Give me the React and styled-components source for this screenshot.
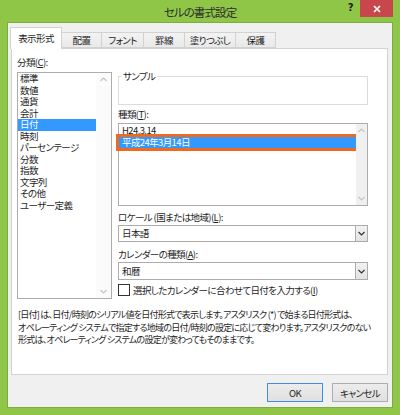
import React from 'react';
import styled, { createGlobalStyle } from 'styled-components';

const Global = createGlobalStyle`
  html, body { margin: 0; padding: 0; }
  body {
    width: 400px; height: 415px; overflow: hidden;
    font-family: "Noto Sans CJK JP", "Noto Sans", sans-serif;
    font-size: 9.5px;
    letter-spacing: -0.6px;
    font-feature-settings: "palt" 1;
    color: #1e1e1e;
  }
  #root { width: 400px; height: 415px; }
`;

const Window = styled.div`
  width: 400px; height: 415px; box-sizing: border-box;
  background: #8fc648;
  display: flex; flex-direction: column;
  padding: 0 7px 7px 7px;
`;

const TitleBar = styled.div`
  height: 22px; flex: none;
  display: grid; grid-template-columns: 1fr auto 1fr;
  align-items: start;
`;

const Title = styled.div`
  grid-column: 2;
  font-size: 11.5px; letter-spacing: -0.9px; line-height: 22px; color: #2d2d2d;
  padding-top: 1px;
`;

const Controls = styled.div`
  grid-column: 3; justify-self: end;
  display: flex; align-items: flex-start;
`;

const Help = styled.div`
  font-family: "DejaVu Sans", sans-serif;
  font-weight: bold; font-size: 10px; color: #1a1a1a;
  line-height: 16px; margin-right: 7px;
`;

const CloseBtn = styled.div`
  width: 33px; height: 17px; background: #c7474d;
  display: flex; align-items: center; justify-content: center;
`;

const Client = styled.div`
  flex: 1; background: #f0f0f0;
  border: 1px solid #7cae3e;
  display: flex; flex-direction: column;
  padding: 4px 4px 0 2px;
`;

const TabStrip = styled.div`
  display: flex; align-items: flex-end; height: 21px;
  position: relative; z-index: 1;
`;

const Tab = styled.div`
  box-sizing: border-box;
  width: ${p => p.$w}px;
  height: ${p => (p.$active ? 22 : 16)}px;
  margin-bottom: ${p => (p.$active ? -1 : 0)}px;
  margin-left: ${p => (p.$first ? 0 : -1)}px;
  background: ${p => (p.$active ? '#ffffff' : 'linear-gradient(#f3f3f3, #e9e9e9)')};
  border: 1px solid #d2d2d2;
  border-bottom: ${p => (p.$active ? 'none' : '1px solid #d2d2d2')};
  display: flex; align-items: center; justify-content: center;
  padding-bottom: ${p => (p.$active ? 2 : 0)}px;
  line-height: 12px; white-space: nowrap;
  position: relative; z-index: ${p => (p.$active ? 2 : 1)};
`;

const Panel = styled.div`
  box-sizing: border-box; height: 327px; margin-left: 1px;
  background: #fff; border: 1px solid #d2d2d2;
  padding: 7px 19px 0 5px;
  display: flex; flex-direction: column;
`;

const Body = styled.div`
  display: grid; grid-template-columns: 95px 250px; column-gap: 6px;
`;

const Col = styled.div`
  display: flex; flex-direction: column;
  padding-top: ${p => p.$top || 0}px;
`;

const Label = styled.div`
  line-height: 12px; white-space: nowrap;
  margin-top: ${p => p.$mt || 0}px;
  margin-bottom: ${p => p.$mb || 0}px;
`;

const Key = styled.span`
  text-decoration: underline;
`;

const ListBox = styled.div`
  box-sizing: border-box; height: ${p => p.$h}px;
  border: 1px solid #abadb3; background: #fff;
  display: grid; grid-template-columns: 1fr ${p => p.$sb}px;
`;

const Items = styled.div`
  padding-top: ${p => p.$pt || 0}px;
  display: flex; flex-direction: column;
`;

const Item = styled.div`
  height: 11.5px; line-height: 11.5px; padding-left: ${p => p.$pl || 2}px;
  white-space: nowrap;
  background: ${p => (p.$sel ? '#3399ff' : 'transparent')};
  color: ${p => (p.$sel ? '#fff' : 'inherit')};
  outline: ${p => (p.$mark ? '3px solid #ee6a1f' : 'none')};
`;

const ScrollBar = styled.div`
  background: ${p => p.$bg};
  display: flex; flex-direction: column; justify-content: space-between;
  align-items: center; padding: 4px 0;
`;

const Group = styled.fieldset`
  margin: 0; box-sizing: border-box; height: 35px;
  border: 1px solid #dcdcdc; padding: 0;
`;

const Legend = styled.legend`
  margin-left: 2px; padding: 0 2px; line-height: 12px;
`;

const Select = styled.div`
  display: flex; height: ${p => p.$h}px;
  margin-top: ${p => p.$mt || 0}px;
`;

const SelectField = styled.div`
  flex: 1; box-sizing: border-box; border: 1px solid #acacac; border-right: none;
  background: #fff; line-height: ${p => p.$h - 2}px; padding-left: 3px;
`;

const DropBtn = styled.div`
  width: 13px; box-sizing: border-box; border: 1px solid #acacac;
  background: linear-gradient(#f2f2f2, #e3e3e3);
  display: flex; align-items: center; justify-content: center;
`;

const CheckRow = styled.div`
  display: flex; align-items: center; gap: 3px; margin-top: 4px; height: 12px;
`;

const Box = styled.div`
  width: 12px; height: 12px; box-sizing: border-box;
  border: 1px solid #333; background: #fff;
`;

const Desc = styled.div`
  margin-top: 10px; padding-left: 1px; line-height: 12.5px; white-space: nowrap;
  font-size: 9px; letter-spacing: -0.75px;
`;

const ButtonRow = styled.div`
  display: flex; justify-content: flex-end; gap: 9px; margin-top: 8px;
`;

const Button = styled.div`
  width: 56px; height: 19px; box-sizing: border-box;
  border: 1px solid ${p => (p.$def ? '#3c8fe0' : '#adadad')};
  background: linear-gradient(#ececec, #e0e0e0);
  display: flex; align-items: center; justify-content: center;
`;

const Up = ({ c = '#c4c4c4' }) => (
  <svg width="7" height="5" viewBox="0 0 7 5"><polyline points="0.5,4 3.5,1 6.5,4" fill="none" stroke={c} strokeWidth="1.2" /></svg>
);
const Down = ({ c = '#c4c4c4', w = 7 }) => (
  <svg width={w} height="5" viewBox="0 0 7 5"><polyline points="0.5,1 3.5,4 6.5,1" fill="none" stroke={c} strokeWidth="1.2" /></svg>
);

const tabs = [
  { label: '表示形式', w: 52, active: true },
  { label: '配置', w: 41 },
  { label: 'フォント', w: 43 },
  { label: '罫線', w: 42 },
  { label: '塗りつぶし', w: 52 },
  { label: '保護', w: 41 },
];

const categories = ['標準', '数値', '通貨', '会計', '日付', '時刻', 'パーセンテージ', '分数', '指数', '文字列', 'その他', 'ユーザー定義'];

export default function App() {
  return (
    <>
      <Global />
      <Window>
        <TitleBar>
          <Title>セルの書式設定</Title>
          <Controls>
            <Help>?</Help>
            <CloseBtn>
              <svg width="8" height="8" viewBox="0 0 8 8"><path d="M1 1L7 7M7 1L1 7" stroke="#fff" strokeWidth="1.6" /></svg>
            </CloseBtn>
          </Controls>
        </TitleBar>
        <Client>
          <TabStrip>
            {tabs.map((t, i) => (
              <Tab key={t.label} $w={t.w} $active={t.active} $first={i === 0}>{t.label}</Tab>
            ))}
          </TabStrip>
          <Panel>
            <Body>
              <Col>
                <Label $mb={4}>分類(<Key>C</Key>):</Label>
                <ListBox $h={227} $sb={15}>
                  <Items>
                    {categories.map(c => (
                      <Item key={c} $sel={c === '日付'}>{c}</Item>
                    ))}
                  </Items>
                  <ScrollBar $bg="#fbfbfb"><Up /><Down /></ScrollBar>
                </ListBox>
              </Col>
              <Col $top={14}>
                <Group>
                  <Legend>サンプル</Legend>
                </Group>
                <Label $mt={3} $mb={3}>種類(<Key>T</Key>):</Label>
                <ListBox $h={83} $sb={11}>
                  <Items $pt={1}>
                    <Item $pl={3}>H24.3.14</Item>
                    <Item $pl={3} $sel $mark>平成24年3月14日</Item>
                  </Items>
                  <ScrollBar $bg="#f0f0f0"><Up /><Down /></ScrollBar>
                </ListBox>
                <Label $mt={5}>ロケール (国または地域)(<Key>L</Key>):</Label>
                <Select $h={17} $mt={2}>
                  <SelectField $h={17}>日本語</SelectField>
                  <DropBtn><Down c="#333" /></DropBtn>
                </Select>
                <Label $mt={6}>カレンダーの種類(<Key>A</Key>):</Label>
                <Select $h={18} $mt={2}>
                  <SelectField $h={18}>和暦</SelectField>
                  <DropBtn><Down c="#333" /></DropBtn>
                </Select>
                <CheckRow>
                  <Box />
                  <span>選択したカレンダーに合わせて日付を入力する(<Key>I</Key>)</span>
                </CheckRow>
              </Col>
            </Body>
            <Desc>
              [日付] は、日付/時刻のシリアル値を日付形式で表示します。アスタリスク (*) で始まる日付形式は、<br />
              オペレーティング システムで指定する地域の日付/時刻の設定に応じて変わります。アスタリスクのない<br />
              形式は、オペレーティング システムの設定が変わってもそのままです。
            </Desc>
          </Panel>
          <ButtonRow>
            <Button $def>OK</Button>
            <Button>キャンセル</Button>
          </ButtonRow>
        </Client>
      </Window>
    </>
  );
}
